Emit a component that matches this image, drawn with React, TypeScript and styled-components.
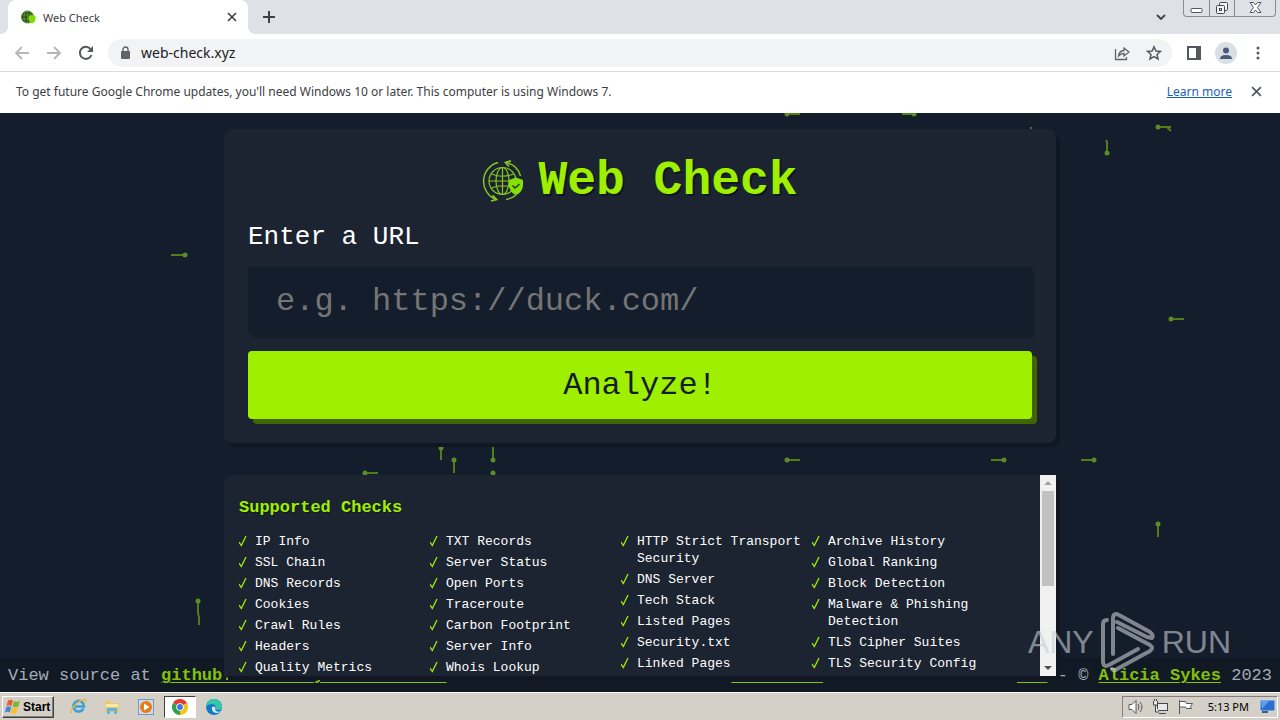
import React from "react";
import styled, { createGlobalStyle, css } from "styled-components";

const MONO = `"Liberation Mono", monospace`;
const UI = `"Noto Sans", "Open Sans", sans-serif`;
const GREEN = "#9fef00";

const GlobalStyle = createGlobalStyle`
  *, *::before, *::after { box-sizing: border-box; }
  body { margin: 0; background: #141d2b; }
  button, input { font: inherit; }
`;

const Desktop = styled.div`
  display: flex;
  flex-direction: column;
  height: 100vh;
  overflow: hidden;
  font-family: ${UI};
  font-size: 12px;
  color: #3c4043;
`;

const IconButton = styled.button<{ $size?: number }>`
  display: flex;
  align-items: center;
  justify-content: center;
  flex: none;
  width: ${(p) => p.$size ?? 32}px;
  height: ${(p) => p.$size ?? 32}px;
  padding: 0;
  border: 0;
  background: none;
  color: inherit;
`;

/* ---------- browser chrome ---------- */

const TabStrip = styled.div`
  display: flex;
  align-items: flex-end;
  flex: none;
  height: 34px;
  padding-left: 8px;
  background: #dee1e6;
`;

const Tab = styled.div`
  position: relative;
  display: flex;
  align-items: center;
  width: 240px;
  height: 34px;
  margin-right: 4px;
  padding: 0 4px 0 12px;
  gap: 6px;
  border-radius: 8px 8px 0 0;
  background: #fff;
  &::before, &::after {
    content: "";
    position: absolute;
    bottom: 0;
    width: 8px;
    height: 8px;
  }
  &::before { left: -8px; background: radial-gradient(circle at 0 0, transparent 8px, #fff 8px); }
  &::after { right: -8px; background: radial-gradient(circle at 100% 0, transparent 8px, #fff 8px); }
`;

const TabTitle = styled.span`
  flex: 1;
  font-size: 11px;
`;

const StripSpacer = styled.div`
  flex: 1;
`;

const WindowButtons = styled.div`
  display: flex;
  align-self: flex-start;
  height: 17px;
  margin: 0 4px 0 5px;
  border: 1px solid #8a8d93;
  border-top: 0;
  border-radius: 0 0 4px 4px;
`;

const WindowButton = styled.button<{ $wide?: boolean }>`
  display: flex;
  align-items: center;
  justify-content: center;
  width: ${(p) => (p.$wide ? 41 : 25)}px;
  padding: 0;
  border: 0;
  background: none;
  & + & { border-left: 1px solid #8a8d93; }
`;

const Toolbar = styled.div`
  display: flex;
  align-items: center;
  flex: none;
  height: 38px;
  padding: 0 6px;
  border-bottom: 1px solid #d9dbde;
  background: #fff;
`;

const AddressBar = styled.label`
  display: flex;
  align-items: center;
  flex: 1;
  height: 28px;
  margin: 0 6px;
  padding: 0 2px 0 12px;
  border-radius: 14px;
  background: #f1f3f4;
  color: #5f6368;
`;

const AddressInput = styled.input`
  flex: 1;
  min-width: 0;
  padding: 0 10px;
  border: 0;
  outline: 0;
  background: none;
  font-size: 14px;
  color: #202124;
`;

const Avatar = styled.span`
  display: flex;
  align-items: flex-end;
  justify-content: center;
  width: 22px;
  height: 22px;
  border-radius: 50%;
  background: #dadfe5;
`;

const InfoBar = styled.div`
  display: flex;
  align-items: center;
  flex: none;
  height: 41px;
  padding: 0 8px 2px 16px;
  background: #fff;
  font-size: 12px;
`;

const InfoText = styled.span`
  flex: 1;
`;

const InfoLink = styled.a`
  margin-right: 8px;
  color: #1a5fb4;
  text-decoration: underline;
`;

/* ---------- web page ---------- */

const Page = styled.main`
  position: relative;
  display: flex;
  flex-direction: column;
  align-items: center;
  flex: 1;
  min-height: 0;
  padding: 16px;
  overflow: hidden;
  background: #141d2b;
  font-family: ${MONO};
  color: #fff;
`;

const Circuit = styled.svg`
  position: absolute;
  top: 0;
  left: 0;
  width: 100%;
  height: 100%;
`;

const panel = css`
  position: relative;
  z-index: 1;
  width: 100%;
  max-width: 832px;
  background: #1c2431;
  box-shadow: 4px 4px 0 #101722;
`;

const FormCard = styled.form`
  ${panel}
  display: flex;
  flex-direction: column;
  flex: none;
  padding: 24px;
  border-radius: 8px;
`;

const Title = styled.h1`
  display: flex;
  align-items: center;
  justify-content: center;
  gap: 14px;
  margin: 0;
  font-size: 48px;
  line-height: 56px;
  font-weight: 700;
  color: ${GREEN};
  text-shadow: 2px 2px 0 #101722;
`;

const UrlLabel = styled.label`
  margin: 8px 0 10px;
  font-size: 26px;
  line-height: 40px;
`;

const UrlInput = styled.input`
  height: 68px;
  padding: 0 28px;
  border: 0;
  border-radius: 4px;
  outline: 0;
  background: #141d2b;
  box-shadow: 3px 3px 0 #161e2a;
  font-size: 32px;
  color: #fff;
  &::placeholder { color: #757575; opacity: 1; }
`;

const AnalyzeButton = styled.button`
  height: 68px;
  margin-top: 16px;
  border: 0;
  border-radius: 4px;
  background: ${GREEN};
  box-shadow: 5px 5px 0 #436500;
  font-size: 32px;
  color: #141d2b;
`;

const ChecksPanel = styled.section`
  ${panel}
  display: flex;
  flex: 1;
  min-height: 0;
  margin-top: 32px;
  overflow: hidden;
  border-radius: 8px 0 0 0;
`;

const ChecksBody = styled.div`
  flex: 1;
  padding: 20px 17px 0 15px;
`;

const ChecksTitle = styled.h2`
  margin: 0 0 12px;
  font-size: 17px;
  line-height: 26px;
  color: ${GREEN};
  text-shadow: 1px 1px 0 #101722;
`;

const CheckColumns = styled.div`
  display: grid;
  grid-template-columns: repeat(4, 1fr);
  margin-right: 20px;
`;

const CheckList = styled.ul`
  display: flex;
  flex-direction: column;
  gap: 4px;
  margin: 0;
  padding: 0;
  list-style: none;
`;

const CheckItem = styled.li`
  display: grid;
  grid-template-columns: 16px 1fr;
  font-size: 13px;
  line-height: 17px;
  svg { margin-top: 2px; }
`;

const Scrollbar = styled.div`
  display: flex;
  flex-direction: column;
  align-items: center;
  width: 16px;
  background: #f1f1f1;
`;

const ScrollArrow = styled.span`
  display: flex;
  align-items: center;
  justify-content: center;
  width: 16px;
  height: 16px;
`;

const ScrollTrack = styled.div`
  flex: 1;
  width: 12px;
`;

const ScrollThumb = styled.div`
  height: 56%;
  background: #c1c1c1;
`;

const Footer = styled.footer`
  position: absolute;
  right: 0;
  bottom: 0;
  left: 0;
  display: flex;
  justify-content: space-between;
  padding: 5px 8px 3px;
  background: #101924;
  font-size: 17px;
  line-height: 26px;
  color: #a4abb6;
  white-space: nowrap;
`;

const FooterLink = styled.a<{ $strong?: boolean }>`
  color: #83c208;
  font-weight: ${(p) => (p.$strong ? 700 : 400)};
  text-decoration: underline;
  text-decoration-thickness: 1px;
  text-underline-offset: 2px;
`;

const Watermark = styled.div`
  position: absolute;
  right: 49px;
  bottom: 19px;
  z-index: 2;
  display: flex;
  align-items: center;
  gap: 6px;
  font-family: "Liberation Sans", sans-serif;
  font-size: 32px;
  color: #c9cdd2;
  opacity: 0.6;
`;

/* ---------- taskbar ---------- */

const Taskbar = styled.nav`
  display: flex;
  align-items: center;
  flex: none;
  height: 28px;
  padding: 0 2px;
  gap: 8px;
  border-top: 1px solid #fff;
  background: #d4d0c8;
  color: #000;
`;

const StartButton = styled.button`
  display: flex;
  align-items: center;
  gap: 2px;
  width: 52px;
  height: 22px;
  padding: 0 2px;
  border: 1px solid;
  border-color: #fff #404040 #404040 #fff;
  background: #d4d0c8;
  box-shadow: inset -1px -1px 0 #808080;
  font-family: "Liberation Sans", sans-serif;
  font-size: 12px;
  font-weight: 700;
  color: #000;
`;

const TaskButton = styled.button<{ $active?: boolean }>`
  display: flex;
  align-items: center;
  justify-content: center;
  width: 32px;
  height: 22px;
  padding: 0;
  border: 1px solid;
  border-color: ${(p) => (p.$active ? "#404040 #fff #fff #404040" : "transparent")};
  background: ${(p) => (p.$active ? "#fff" : "none")};
`;

const TaskButtons = styled.div`
  display: flex;
  flex: 1;
  gap: 2px;
`;

const Tray = styled.div`
  display: flex;
  align-items: center;
  gap: 8px;
  height: 22px;
  padding: 0 1px 0 5px;
  border: 1px solid;
  border-color: #808080 #fff #fff #808080;
  font-size: 11px;
`;

const Clock = styled.time`
  margin: 0 2px 0 6px;
`;

/* ---------- drawings ---------- */

const Favicon = () => (
  <svg width="17" height="16" viewBox="0 0 17 16">
    <circle cx="7.5" cy="8" r="6" fill="#2f4a1c" stroke="#4f8a1c" strokeWidth="1" />
    <path d="M2 6h11M2 10h11M7.5 2v12M5 2.500q-2 5.500 0 11M10 2.500q2 5.500 0 11" fill="none" stroke="#6fa83a" strokeWidth=".6" />
    <path d="M12 6l3.500 1v3.500q-.5 3-3.500 4-3-1-3.500-4V7z" fill="#7fdd00" />
  </svg>
);

const Logo = () => (
  <svg width="42" height="42" viewBox="0 0 42 42" fill="none" stroke="#86c81c" strokeWidth="1.200">
    <circle cx="20.500" cy="21" r="13.500" />
    <ellipse cx="20.500" cy="21" rx="6.500" ry="13.500" />
    <path d="M7 21h27M20.500 7.500v27M9.500 14q11 4.500 22 0M9.500 28q11-4.500 22 0" />
    <path d="M16 2.500A19.500 19.500 0 0 0 14 39.500M24 39.500q6-1 10-4.500M24 2.500A19 19 0 0 1 38.500 16" strokeWidth="1.500" />
    <path d="M29 .8l-5.500 1.700 3.500 4M10.500 35.500l4 4-5.500 1.500" strokeWidth="1.800" />
    <path d="M34 17.500l7 2.500v6q-1 6.500-7 9-6-2.500-7-9v-6z" fill="#86df08" stroke="none" />
    <path d="M30.500 25.500l2.500 2.500 4.500-4" stroke="#1d3a10" strokeWidth="1.500" />
  </svg>
);

const Tick = () => (
  <svg width="10" height="12" viewBox="0 0 10 12" fill="none" stroke={GREEN} aria-hidden="true">
    <path d="M0 7l2.300 3.500L7 1" strokeWidth="1.300" />
  </svg>
);

const Cross = ({ size = 10, color = "#3c4043" }: { size?: number; color?: string }) => (
  <svg width={size} height={size} viewBox="0 0 10 10" stroke={color} strokeWidth="1.600">
    <path d="M1 1l8 8M9 1L1 9" />
  </svg>
);

const Play = () => (
  <svg width="56" height="62" viewBox="0 0 56 62" fill="none" stroke="#c9cdd2" strokeWidth="4" strokeLinecap="round" strokeLinejoin="round">
    <path d="M7 9Q3 9 3 13V50Q3 57 9 54L38 38" />
    <path d="M13 43V8Q13 1 19 4L50 21Q54 24 52 27L47 26L17 11" />
    <path d="M18 17L50 34Q54 37 50 40L17 58Q14 61 12 58" />
  </svg>
);

type Trace = { x: number; y: number; d: string };

const traces: Trace[] = [
  { x: 787, y: 1, d: "h13" },
  { x: 914, y: 1, d: "h-12" },
  { x: 1158, y: 14, d: "h13m-4 0l4 4" },
  { x: 1107, y: 40, d: "v-11l-1-2" },
  { x: 185, y: 142, d: "h-14" },
  { x: 1171, y: 206, d: "h13" },
  { x: 441, y: 335, d: "v12" },
  { x: 454, y: 347, d: "v13" },
  { x: 493, y: 347, d: "v-13" },
  { x: 493, y: 360, d: "v3" },
  { x: 365, y: 360, d: "h13" },
  { x: 787, y: 347, d: "h13" },
  { x: 1004, y: 347, d: "h-13" },
  { x: 1094, y: 347, d: "h-13" },
  { x: 1158, y: 411, d: "v13" },
  { x: 198, y: 488, d: "v12l1 4v8" },
  { x: 365, y: 577, d: "h-13" },
  { x: 1031, y: 15, d: "h0" },
];

const CircuitArt = () => (
  <Circuit aria-hidden="true">
    {traces.map((t, i) => (
      <g key={i} stroke="#527d1a" fill="#5d8a2a">
        <path d={`M${t.x} ${t.y}${t.d}`} fill="none" strokeWidth="2" />
        <circle cx={t.x} cy={t.y} r={t.d === "h0" ? 1 : 2.5} stroke="none" />
      </g>
    ))}
  </Circuit>
);

const columns = [
  ["IP Info", "SSL Chain", "DNS Records", "Cookies", "Crawl Rules", "Headers", "Quality Metrics"],
  ["TXT Records", "Server Status", "Open Ports", "Traceroute", "Carbon Footprint", "Server Info", "Whois Lookup"],
  ["HTTP Strict Transport Security", "DNS Server", "Tech Stack", "Listed Pages", "Security.txt", "Linked Pages"],
  ["Archive History", "Global Ranking", "Block Detection", "Malware & Phishing Detection", "TLS Cipher Suites", "TLS Security Config"],
];

const BrowserChrome = () => (
  <>
    <TabStrip>
      <Tab>
        <Favicon />
        <TabTitle>Web Check</TabTitle>
        <IconButton $size={24} aria-label="Close tab"><Cross /></IconButton>
      </Tab>
      <IconButton $size={34} aria-label="New tab">
        <svg width="12" height="12" stroke="#3c4043" strokeWidth="2"><path d="M6 0v12M0 6h12" /></svg>
      </IconButton>
      <StripSpacer />
      <IconButton $size={34} aria-label="Search tabs">
        <svg width="10" height="7" fill="none" stroke="#3c4043" strokeWidth="1.800"><path d="M1 1l4 4 4-4" /></svg>
      </IconButton>
      <WindowButtons>
        <WindowButton aria-label="Minimize">
          <svg width="13" height="12" fill="#fff" stroke="#55585d"><rect x="1" y="6.500" width="11" height="4" rx="1" /></svg>
        </WindowButton>
        <WindowButton aria-label="Restore">
          <svg width="14" height="13" fill="#f4f5f7" stroke="#44474c"><rect x="4.500" y=".5" width="8" height="8" rx="1" /><rect x="1.500" y="3.500" width="8" height="8" rx="1" /><rect x="4.500" y="6.500" width="2" height="2" /></svg>
        </WindowButton>
        <WindowButton $wide aria-label="Close">
          <svg width="13" height="12" fill="#fff" stroke="#55585d"><path d="M1 .5h3.500l2 2.500 2-2.500H12L8.500 5.500 12 10.500H8.500l-2-2.500-2 2.500H1l3.500-5z" /></svg>
        </WindowButton>
      </WindowButtons>
    </TabStrip>
    <Toolbar>
      <IconButton aria-label="Back">
        <svg width="16" height="16" fill="none" stroke="#b4b6b9" strokeWidth="1.800"><path d="M15 8H2M8 2L2 8l6 6" /></svg>
      </IconButton>
      <IconButton aria-label="Forward">
        <svg width="16" height="16" fill="none" stroke="#b4b6b9" strokeWidth="1.800"><path d="M1 8h13M8 2l6 6-6 6" /></svg>
      </IconButton>
      <IconButton aria-label="Reload">
        <svg width="16" height="16" fill="none" stroke="#55585c" strokeWidth="2"><path d="M13.500 10A6 6 0 1 1 12.500 4" /><path d="M15 1v6H9z" fill="#55585c" stroke="none" /></svg>
      </IconButton>
      <AddressBar>
        <svg width="11" height="14" fill="#5f6368"><rect x="1" y="5" width="9" height="8" rx="1" /><path d="M3 6V3.500a2.500 2.500 0 0 1 5 0V6" fill="none" stroke="#5f6368" strokeWidth="1.400" /></svg>
        <AddressInput aria-label="Address" defaultValue="web-check.xyz" />
        <IconButton aria-label="Share">
          <svg width="16" height="16" fill="none" stroke="#5f6368" strokeWidth="1.300"><path d="M1.500 4v10.500h11V12M4.500 11q.5-5 5.500-5.500V3l5 4-5 4V8.500q-3.500 0-5.500 2.500z" /></svg>
        </IconButton>
        <IconButton aria-label="Bookmark">
          <svg width="16" height="16" fill="none" stroke="#55595e" strokeWidth="1.500"><path d="M8 1.800l1.900 4.200 4.500.4-3.400 3 1 4.500L8 11.500l-4 2.400 1-4.500-3.400-3 4.500-.4z" /></svg>
        </IconButton>
      </AddressBar>
      <IconButton aria-label="Side panel">
        <svg width="14" height="14"><rect x="1" y="1" width="12" height="12" fill="none" stroke="#55595e" strokeWidth="2" /><path d="M9 1h4v12H9z" fill="#55595e" /></svg>
      </IconButton>
      <IconButton aria-label="Profile">
        <Avatar>
          <svg width="14" height="17" fill="#4a5b78"><circle cx="7" cy="3.500" r="3" /><path d="M1 12q0-4 6-4t6 4z" /></svg>
        </Avatar>
      </IconButton>
      <IconButton aria-label="Menu">
        <svg width="4" height="14" fill="#55595e"><circle cx="2" cy="2" r="1.500" /><circle cx="2" cy="7" r="1.500" /><circle cx="2" cy="12" r="1.500" /></svg>
      </IconButton>
    </Toolbar>
    <InfoBar>
      <InfoText>To get future Google Chrome updates, you'll need Windows 10 or later. This computer is using Windows 7.</InfoText>
      <InfoLink href="#learn">Learn more</InfoLink>
      <IconButton aria-label="Dismiss"><Cross size={11} color="#55595e" /></IconButton>
    </InfoBar>
  </>
);

const WindowsTaskbar = () => (
  <Taskbar>
    <StartButton>
      <svg width="16" height="15" viewBox="0 0 16 15">
        <path d="M3 1.500q3-1.500 5 0L6.500 7q-2-1.500-5 0z" fill="#e8602c" />
        <path d="M9 2q3 1.500 6 0l-1.500 5.500q-3 1.500-6 0z" fill="#7db83a" />
        <path d="M1.200 8q3-1.500 5 0L4.800 13.500q-2-1.500-5 0z" fill="#4a86d8" />
        <path d="M7 8.500q3 1.500 6 0L11.500 14q-3 1.500-6 0z" fill="#f4c22c" />
      </svg>
      Start
    </StartButton>
    <TaskButtons>
      <TaskButton aria-label="Internet Explorer">
        <svg width="17" height="17" viewBox="0 0 17 17" fill="none">
          <path d="M13.500 10.500A5.300 5.300 0 1 1 14 8.500H5" stroke="#3aa0dc" strokeWidth="2.600" />
          <path d="M2 14.500Q-1 15 2.500 10 8 3 14 1.500q3-.5 1 3" stroke="#e8b83c" strokeWidth="1.300" />
        </svg>
      </TaskButton>
      <TaskButton aria-label="Explorer">
        <svg width="16" height="16" viewBox="0 0 16 16"><path d="M1 2h5l1 2h8v9H1z" fill="#eac968" /><path d="M2 5h12v3H2z" fill="#f7ebaf" /><path d="M3 15V9h10v6h-3v-3H6v3z" fill="#62b4dc" /></svg>
      </TaskButton>
      <TaskButton aria-label="Media Player">
        <svg width="16" height="16" viewBox="0 0 16 16"><rect x=".5" y=".5" width="15" height="15" fill="#c9dcef" stroke="#7897bd" /><circle cx="8" cy="8" r="6" fill="#ee7a14" /><path d="M6 4.500L11.500 8 6 11.500z" fill="#fff" /></svg>
      </TaskButton>
      <TaskButton $active aria-label="Chrome">
        <svg width="16" height="16" viewBox="0 0 16 16">
          <path d="M8 8L1.070 4A8 8 0 0 1 14.930 4z" fill="#e33b2e" />
          <path d="M8 8L14.930 4A8 8 0 0 1 8 16z" fill="#fbc116" />
          <path d="M8 8L8 16A8 8 0 0 1 1.070 4z" fill="#2da14c" />
          <circle cx="8" cy="8" r="3.800" fill="#fff" /><circle cx="8" cy="8" r="2.900" fill="#3b78e7" />
        </svg>
      </TaskButton>
      <TaskButton aria-label="Edge">
        <svg width="16" height="16" viewBox="0 0 16 16"><circle cx="8" cy="8" r="8" fill="#1678c8" /><path d="M0 8A8 8 0 0 1 16 7.500q0 3.500-4 3.500-3 0-2.500-2Q10 5 6 5 2 5 0 8z" fill="#36c6a8" /><path d="M6 8q-1 5 4 6 3 .5 5-2-3 1.500-5 0-1.500-1.500-.5-3Q8.500 6.500 6 8z" fill="#d4e9f2" /></svg>
      </TaskButton>
    </TaskButtons>
    <Tray>
      <svg width="16" height="16" fill="#fff" stroke="#55585c"><path d="M1 5.500h3l4-4v13l-4-4H1z" /><path d="M10 5q2 3 0 6M12 3q4 5 0 10" fill="none" /></svg>
      <svg width="17" height="16" fill="#e8e8e8" stroke="#44474b"><rect x="5.500" y="4.500" width="10" height="7" /><path d="M7 14.500h7M1.500 2v4h4V2M3.500 6v7H7M2.500 0v2M4.500 0v2" /></svg>
      <svg width="17" height="16" fill="#fff" stroke="#55585c"><path d="M2.500 1v14" /><path d="M2.500 2.500h6l1 2h6l-2 3 1 2h-5l-1-1.500h-6z" /></svg>
      <Clock>5:13 PM</Clock>
      <svg width="17" height="15"><rect x="1" y="1" width="15" height="11" fill="#2a6fd0" stroke="#cfd8e6" /><path d="M2 2h8L3 10z" fill="#5fa0ea" /><path d="M3 12h6v2H3z" fill="#385c8a" /></svg>
    </Tray>
  </Taskbar>
);

export default function App() {
  return (
    <Desktop>
      <GlobalStyle />
      <BrowserChrome />
      <Page>
        <CircuitArt />
        <FormCard onSubmit={(e) => e.preventDefault()}>
          <Title><Logo />Web Check</Title>
          <UrlLabel htmlFor="url">Enter a URL</UrlLabel>
          <UrlInput id="url" placeholder="e.g. https://duck.com/" />
          <AnalyzeButton type="submit">Analyze!</AnalyzeButton>
        </FormCard>
        <ChecksPanel>
          <ChecksBody>
            <ChecksTitle>Supported Checks</ChecksTitle>
            <CheckColumns>
              {columns.map((items) => (
                <CheckList key={items[0]}>
                  {items.map((item) => (
                    <CheckItem key={item}><Tick /><span>{item}</span></CheckItem>
                  ))}
                </CheckList>
              ))}
            </CheckColumns>
          </ChecksBody>
          <Scrollbar aria-hidden="true">
            <ScrollArrow><svg width="8" height="4" fill="#a3a3a3"><path d="M0 4l4-4 4 4z" /></svg></ScrollArrow>
            <ScrollTrack><ScrollThumb /></ScrollTrack>
            <ScrollArrow><svg width="8" height="4" fill="#505050"><path d="M0 0l4 4 4-4z" /></svg></ScrollArrow>
          </Scrollbar>
        </ChecksPanel>
        <Footer>
          <span>View source at <FooterLink $strong href="#source">github.com/lissy93/web-check</FooterLink></span>
          <span>
            <FooterLink href="#home">Web-Check</FooterLink> is licensed under <FooterLink href="#license">MIT</FooterLink> - © <FooterLink $strong href="#author">Alicia Sykes</FooterLink> 2023
          </span>
        </Footer>
        <Watermark aria-hidden="true"><span>ANY</span><Play /><span>RUN</span></Watermark>
      </Page>
      <WindowsTaskbar />
    </Desktop>
  );
}
